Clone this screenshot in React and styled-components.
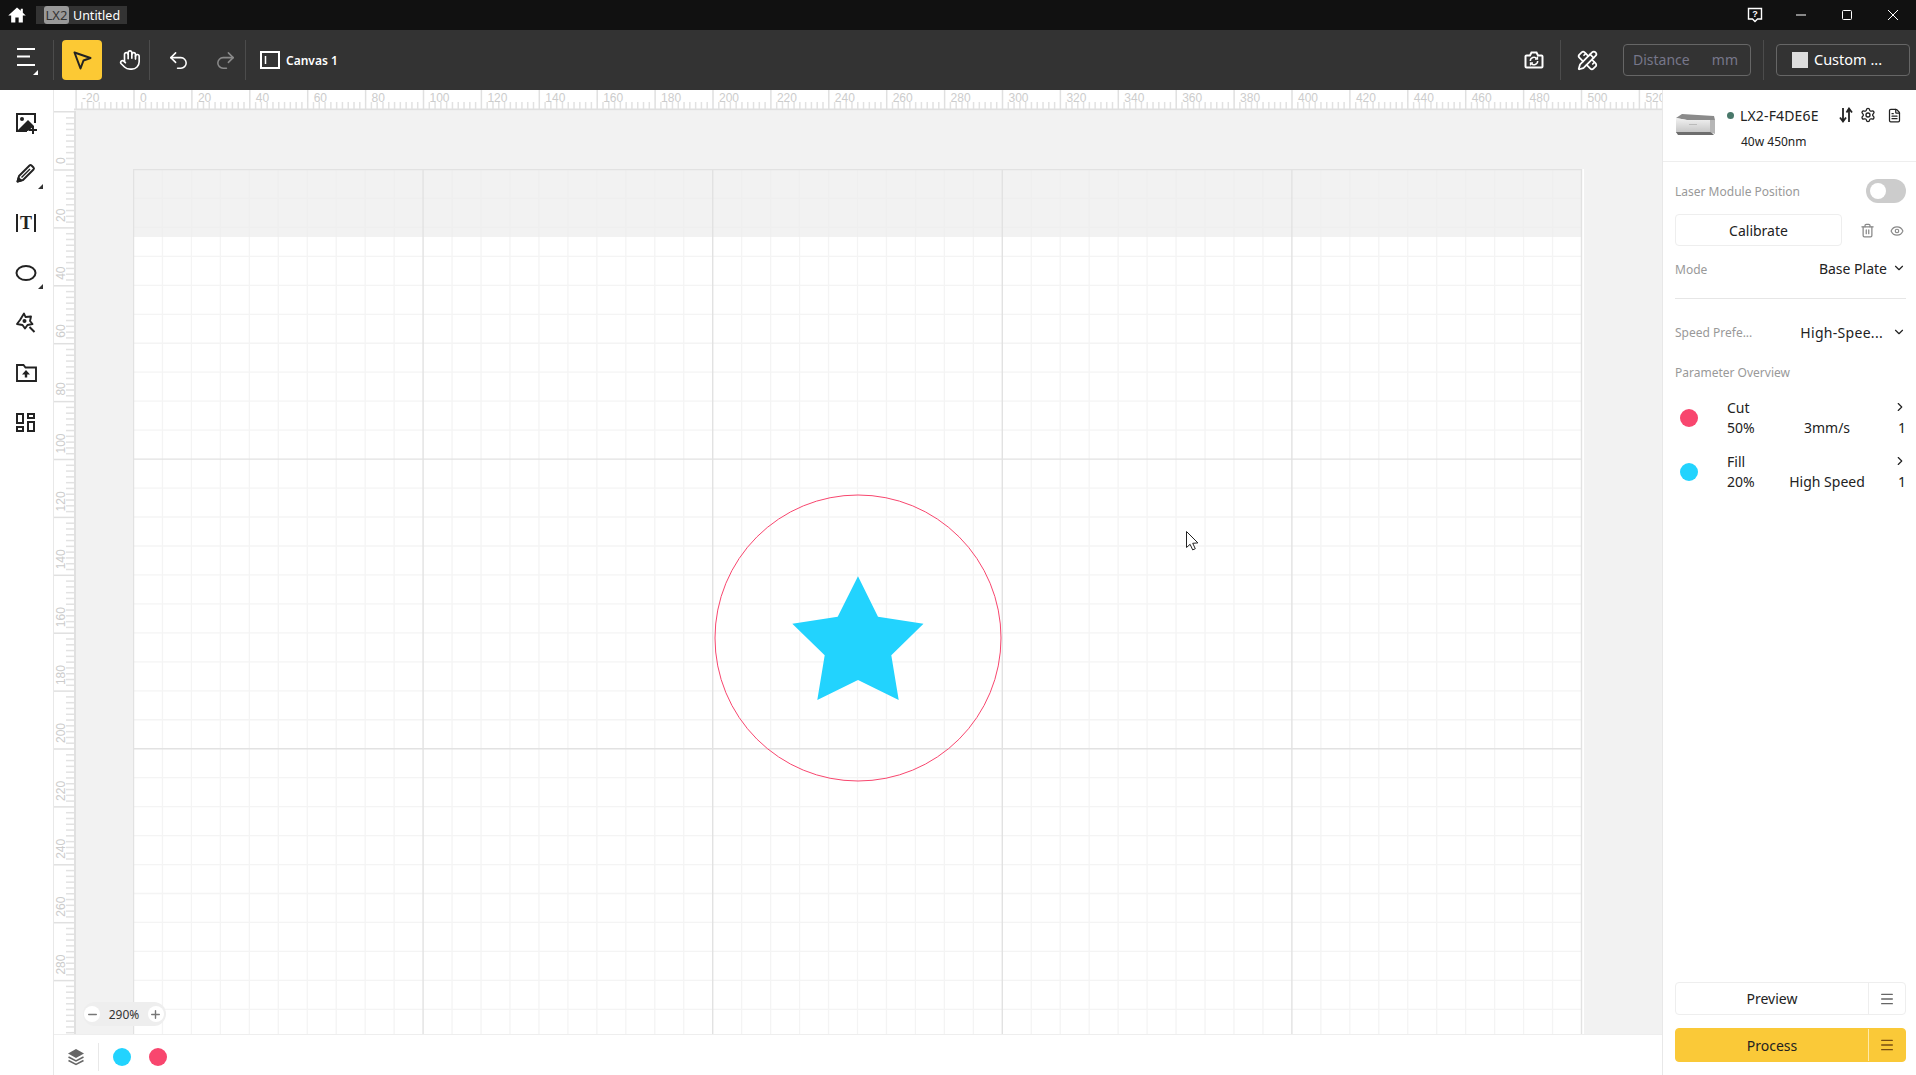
import React from "react";
import styled, { createGlobalStyle } from "styled-components";
import { ChevronDown, ChevronRight, Eye, FileText, Hand, Menu, Minus, PencilRuler, Plus, Redo2, Settings, Trash2, Undo2 } from "lucide-react";

const GlobalStyle = createGlobalStyle`
  html, body { margin: 0; padding: 0; background: #fff; }
  * { box-sizing: border-box; }
  body { font-family: "Noto Sans", "Open Sans", sans-serif; color: #222; }
`;

const Page = styled.div`
  width: 1916px;
  height: 1075px;
  display: flex;
  flex-direction: column;
  overflow: hidden;
`;

const TitleBar = styled.div`
  height: 30px;
  background: #111;
  display: flex;
  align-items: center;
  padding-left: 7px;
  color: #fff;
`;

const DocTab = styled.div`
  margin-left: 9px;
  width: 91px;
  height: 18px;
  background: #333;
  display: flex;
  align-items: center;
  padding-left: 8px;
  gap: 4px;
  font-size: 12.5px;
`;

const Badge = styled.span`
  width: 25px;
  height: 18px;
  background: #999;
  color: #333;
  border-radius: 3px;
  text-align: center;
  line-height: 18px;
  font-size: 13px;
`;

const WindowControls = styled.div`
  margin-left: auto;
  display: flex;
  align-items: center;
`;

const WindowButton = styled.div`
  width: 46px;
  height: 30px;
  display: flex;
  align-items: center;
  justify-content: center;
`;

const Toolbar = styled.div`
  height: 60px;
  background: #333;
  display: flex;
  align-items: center;
  color: #fff;
`;

const ToolDivider = styled.div`
  width: 1px;
  height: 40px;
  background: #4c4c4c;
  margin: ${(p) => p.$margin || "0"};
`;

const ToolButton = styled.div`
  width: ${(p) => p.$width || 40}px;
  height: 40px;
  display: flex;
  align-items: center;
  justify-content: center;
  border-radius: 4px;
  background: ${(p) => (p.$active ? "#fcc934" : "transparent")};
  color: ${(p) => (p.$dim ? "#8a8a8a" : "#fff")};
  margin: ${(p) => p.$margin || "0"};
`;

const MenuGlyph = styled.svg`
  margin-left: 2px;
`;

const CanvasLabel = styled.div`
  display: flex;
  align-items: center;
  gap: 6px;
  margin-left: 14px;
  font-size: 12px;
  font-weight: 600;
`;

const ToolSpacer = styled.div`
  flex: 1;
`;

const DistanceBox = styled.div`
  width: 128px;
  height: 32px;
  margin-left: 16px;
  border: 1px solid #666;
  border-radius: 4px;
  display: flex;
  align-items: center;
  justify-content: space-between;
  padding: 0 12px 2px 9px;
  font-size: 14px;
  color: #77778a;
`;

const CustomBox = styled.div`
  width: 134px;
  height: 32px;
  border: 1px solid #666;
  border-radius: 4px;
  display: flex;
  align-items: center;
  gap: 6px;
  padding: 0 0 2px 15px;
  font-size: 14.5px;
  margin-right: 6px;
`;

const Swatch = styled.div`
  width: 16px;
  height: 16px;
  margin-top: 2px;
  background: #ddd;
`;

const Main = styled.div`
  flex: 1;
  display: flex;
  min-height: 0;
`;

const Sidebar = styled.div`
  width: 54px;
  border-right: 1px solid #e8e8e8;
  display: flex;
  flex-direction: column;
  padding-top: 8px;
`;

const SideButton = styled.div`
  position: relative;
  width: 52px;
  height: 50px;
  display: flex;
  align-items: center;
  justify-content: center;
  color: #222;
`;

const CornerMark = styled.span`
  position: absolute;
  right: 9px;
  bottom: 9px;
  width: 0;
  height: 0;
  border-style: solid;
  border-width: 0 0 5px 5px;
  border-color: transparent transparent #333 transparent;
`;

const Workspace = styled.div`
  width: 1608px;
  display: flex;
  flex-direction: column;
`;

const RulerSvg = styled.svg`
  display: block;
  flex: none;
  font-family: "Liberation Sans", Arial, sans-serif;
  font-size: 12px;
`;

const CanvasRow = styled.div`
  flex: 1;
  display: flex;
  min-height: 0;
`;

const Canvas = styled.div`
  position: relative;
  flex: 1;
  background: #f2f2f2;
  overflow: hidden;
`;

const Paper = styled.div`
  position: absolute;
  left: 57px;
  top: 58px;
  width: 1451px;
  height: 900px;
  background: #fff;
`;

const PaperDrawing = styled.svg`
  position: absolute;
  left: 0;
  top: 0;
`;

const ZoomPill = styled.div`
  position: absolute;
  left: 7px;
  bottom: 8px;
  width: 83px;
  height: 24px;
  border-radius: 12px;
  background: #eee;
  display: flex;
  align-items: center;
  justify-content: space-between;
  padding: 0 2px 0 1px;
  font-size: 12px;
  color: #333;
`;

const ZoomButton = styled.div`
  width: 16px;
  height: 16px;
  border-radius: 50%;
  background: #fff;
  color: #777;
  display: flex;
  align-items: center;
  justify-content: center;
`;

const BottomBar = styled.div`
  height: 41px;
  border-top: 1px solid #eee;
  display: flex;
  align-items: center;
  padding: 4px 0 0 13px;
`;

const LayerDivider = styled.div`
  width: 1px;
  height: 28px;
  background: #e8e8e8;
  margin: 0 14px 0 13px;
`;

const ColorDot = styled.div`
  width: 18px;
  height: 18px;
  border-radius: 50%;
  background: ${(p) => p.$color};
  margin-right: ${(p) => p.$gap || 0}px;
  flex: none;
`;

const RightPanel = styled.div`
  width: 254px;
  border-left: 1px solid #e8e8e8;
  display: flex;
  flex-direction: column;
`;

const DeviceHeader = styled.div`
  height: 72px;
  border-bottom: 1px solid #eee;
  display: flex;
  padding: 22px 0 0 12px;
`;

const DeviceInfo = styled.div`
  margin: -8px 0 0 10px;
  flex: 1;
`;

const DeviceRow = styled.div`
  display: flex;
  align-items: center;
  height: 22px;
  font-size: 14px;
  letter-spacing: 0.15px;
`;

const StatusDot = styled.span`
  width: 7px;
  height: 7px;
  border-radius: 50%;
  background: #49786a;
  margin: 0 6px 0 1px;
`;

const DeviceIcons = styled.div`
  margin-left: 20px;
  display: flex;
  align-items: center;
  gap: 7px;
  & > svg:last-child {
    margin-left: 4px;
  }
`;

const DeviceSub = styled.div`
  font-size: 12px;
  margin: 7px 0 0 15px;
`;

const Controls = styled.div`
  flex: 1;
  display: flex;
  flex-direction: column;
  padding: 17px 10px 13px 12px;
`;

const SettingRow = styled.div`
  display: flex;
  align-items: center;
  justify-content: space-between;
  height: ${(p) => p.$height || 24}px;
  margin-top: ${(p) => p.$top || 0}px;
  margin-bottom: ${(p) => p.$bottom || 0}px;
`;

const MutedLabel = styled.div`
  font-size: 12px;
  color: #999;
`;

const Toggle = styled.div`
  position: relative;
  width: 40px;
  height: 24px;
  border-radius: 12px;
  background: #ccc;
  &::after {
    content: "";
    position: absolute;
    left: 4px;
    top: 4px;
    width: 16px;
    height: 16px;
    border-radius: 50%;
    background: #fff;
  }
`;

const OutlineButton = styled.div`
  width: 167px;
  height: 32px;
  border: 1px solid #eee;
  border-radius: 4px;
  display: flex;
  align-items: center;
  justify-content: center;
  font-size: 14px;
`;

const GrayIcons = styled.div`
  display: flex;
  align-items: center;
  gap: 15px;
  color: #888;
  margin: 1px 2px 0 0;
`;

const SelectValue = styled.div`
  display: flex;
  align-items: center;
  gap: ${(p) => p.$gap || 5}px;
  font-size: 14px;
  letter-spacing: ${(p) => p.$spacing || 0}px;
  padding-bottom: ${(p) => p.$lift || 0}px;
`;

const PanelDivider = styled.div`
  height: 1px;
  background: #e6e6e6;
  margin-top: 17px;
`;

const ParamRow = styled.div`
  display: flex;
  align-items: center;
  height: 54px;
  padding-left: 5px;
  font-size: 14px;
`;

const ParamText = styled.div`
  margin-left: 29px;
  flex: 1;
`;

const ParamLine = styled.div`
  display: grid;
  grid-template-columns: 40px 120px 1fr;
  align-items: center;
  height: 20px;
  line-height: 20px;
`;

const ParamName = styled.div`
  display: flex;
  align-items: center;
  justify-content: space-between;
  height: 20px;
  padding-bottom: 2px;
  margin-right: -1px;
`;

const Centered = styled.span`
  text-align: center;
`;

const RightAligned = styled.span`
  text-align: right;
`;

const Footer = styled.div`
  margin-top: auto;
  display: flex;
  flex-direction: column;
  gap: 13px;
`;

const SplitButton = styled.div`
  height: ${(p) => (p.$primary ? 34 : 33)}px;
  border: 1px solid ${(p) => (p.$primary ? "#fac938" : "#eee")};
  background: ${(p) => (p.$primary ? "#fac938" : "#fff")};
  border-radius: 4px;
  display: flex;
  font-size: 14px;
`;

const SplitMain = styled.div`
  flex: 1;
  display: flex;
  align-items: center;
  justify-content: center;
`;

const SplitMenu = styled.div`
  width: 37px;
  display: flex;
  align-items: center;
  justify-content: center;
  border-left: 1px solid ${(p) => (p.$primary ? "#ffeaa8" : "#eee")};
  color: ${(p) => (p.$primary ? "#7a4e10" : "#666")};
`;

const UNIT = 5.79;
const range = (from, to) => Array.from({ length: to - from + 1 }, (_, i) => from + i);

function HorizontalRuler() {
  const origin = 80; // 0 mark, from the ruler's left edge
  return (
    <RulerSvg width="1608" height="21">
      <rect x="20" y="18.5" width="1588" height="2" fill="#e0e0e0" />
      {range(-10, 265).map((i) =>
        i % 10 === 0 ? null : (
          <rect key={i} x={origin + i * UNIT - 0.75} y="12" width="1.5" height="7" fill="#e2e2e2" />
        )
      )}
      {range(-1, 26).map((i) => (
        <g key={i}>
          <rect x={origin + i * UNIT * 10 - 0.75} y="0" width="1.5" height="20" fill="#e0e0e0" />
          <text x={origin + i * UNIT * 10 + 6} y="12" fill="#ccc">{i * 20}</text>
        </g>
      ))}
    </RulerSvg>
  );
}

function VerticalRuler() {
  const origin = 59;
  return (
    <RulerSvg width="22" height="923">
      <rect x="20" y="0" width="2" height="923" fill="#e0e0e0" />
      <rect x="0" y="0" width="22" height="1.5" fill="#e0e0e0" />
      {range(-10, 150).map((i) =>
        i % 10 === 0 ? null : (
          <rect key={i} x="12" y={origin + i * UNIT - 0.75} width="8" height="1.5" fill="#e2e2e2" />
        )
      )}
      {range(0, 14).map((i) => {
        const y = origin + i * UNIT * 10;
        return (
          <g key={i}>
            <rect x="0" y={y - 0.75} width="20" height="1.5" fill="#e0e0e0" />
            <text x="11" y={y - 6} fill="#ccc" transform={`rotate(-90 11 ${y - 6})`}>{i * 20}</text>
          </g>
        );
      })}
      <rect x="0" y={origin + 868.5} width="20" height="1.5" fill="#e0e0e0" />
    </RulerSvg>
  );
}

function PaperArt() {
  const STEP = 28.96;
  const BAND = 68;
  const cols = range(0, 50);
  const rows = range(0, 31);
  const minorCols = cols.filter((i) => i % 10 !== 0);
  const minorRows = rows.filter((i) => i % 10 !== 0);
  const majorCols = cols.filter((i) => i % 10 === 0);
  const majorRows = rows.filter((i) => i % 10 === 0);
  return (
    <PaperDrawing width="1451" height="900">
      {minorCols.map((i) => (
        <line key={i} x1={i * STEP + 0.5} y1="0" x2={i * STEP + 0.5} y2="900" stroke="#f4f4f4" strokeWidth="1.3" />
      ))}
      {minorRows.map((i) => (
        <line key={i} x1="0" y1={i * STEP + 0.5} x2="1449" y2={i * STEP + 0.5} stroke="#f4f4f4" strokeWidth="1.3" />
      ))}
      <rect x="0" y="0" width="1449" height={BAND} fill="#f2f2f2" />
      {minorCols.map((i) => (
        <line key={i} x1={i * STEP + 0.5} y1="0" x2={i * STEP + 0.5} y2={BAND} stroke="#efefef" strokeWidth="1.3" />
      ))}
      {minorRows.slice(0, 2).map((i) => (
        <line key={i} x1="0" y1={i * STEP + 0.5} x2="1449" y2={i * STEP + 0.5} stroke="#efefef" strokeWidth="1.3" />
      ))}
      {majorCols.map((i) => (
        <line key={i} x1={i * STEP + 0.5} y1="0" x2={i * STEP + 0.5} y2="900" stroke="#e2e2e2" strokeWidth="1.4" />
      ))}
      {majorRows.map((i) => (
        <line key={i} x1="0" y1={i * STEP + 0.5} x2="1449" y2={i * STEP + 0.5} stroke="#e2e2e2" strokeWidth="1.4" />
      ))}
      <circle cx="725" cy="469" r="143" fill="none" stroke="#f8466e" strokeWidth="1" />
      <polygon
        points="725,407.3 745,447.7 790.5,454.7 758.3,486.3 765.7,531 725,511 684.3,531 691.7,486.3 659.3,454.7 704.7,447.7"
        fill="#22d3fe"
      />
      <path d="M1053.5 362.5v16l3.6-3.2 2.6 5.6 2.6-1.2-2.6-5.4 5.2-.4z" fill="#fff" stroke="#222" strokeWidth="1" />
    </PaperDrawing>
  );
}

function PrinterIcon() {
  return (
    <svg width="41" height="24" viewBox="0 0 41 24">
      <defs>
        <linearGradient id="body" x1="0" y1="0" x2="0" y2="1">
          <stop offset="0" stopColor="#f2f2f2" />
          <stop offset="1" stopColor="#c4c4c4" />
        </linearGradient>
      </defs>
      <polygon points="1,6 7,2 39,4 40,8 12,8" fill="#8b8b8b" />
      <polygon points="1,6 12,8 40,8 40,21 1,21" fill="url(#body)" />
      <polygon points="1,20 36,20 39,23 3,23" fill="#6d6d6d" />
      <polygon points="35,8 40,8 40,22 35,20" fill="#b6b6b6" />
      <rect x="14" y="12" width="8" height="1" fill="#bbb" />
    </svg>
  );
}

const Icon = ({ size = 24, box = 24, children, ...rest }) => (
  <svg width={size} height={size} viewBox={`0 0 ${box} ${box}`} fill="none" stroke="currentColor" strokeWidth="2" {...rest}>
    {children}
  </svg>
);

export default function App() {
  return (
    <Page>
      <GlobalStyle />
      <TitleBar>
        <Icon size={20}>
          <path d="M12 3 1.5 12.5H5V21h5v-6h4v6h5v-8.500h3.500L19 9.300V4.500h-2.500v2.500z" fill="#fff" stroke="none" />
        </Icon>
        <DocTab>
          <Badge>LX2</Badge>
          <span>Untitled</span>
        </DocTab>
        <WindowControls>
          <WindowButton>
            <svg width="16" height="16" viewBox="0 0 16 16">
              <path d="M1.500 1.500h13v10.500h-4l-2.500 2.500-2.500-2.500h-4z" fill="none" stroke="#fff" strokeWidth="1.400" />
              <text x="8" y="10" textAnchor="middle" fontSize="9" fontWeight="700" fill="#fff" fontFamily="Liberation Sans">?</text>
            </svg>
          </WindowButton>
          <WindowButton>
            <svg width="12" height="12"><path d="M1 6h10" stroke="#fff" /></svg>
          </WindowButton>
          <WindowButton>
            <svg width="12" height="12"><rect x="1.500" y="1.500" width="9" height="9" rx="1" fill="none" stroke="#fff" /></svg>
          </WindowButton>
          <WindowButton>
            <svg width="12" height="12"><path d="M1 1l10 10M11 1 1 11" stroke="#fff" /></svg>
          </WindowButton>
        </WindowControls>
      </TitleBar>

      <Toolbar>
        <ToolButton $width={53}>
          <MenuGlyph width="22" height="30" viewBox="0 0 22 30">
            <path d="M0 4h18M0 11.500h13M0 20h18" stroke="#fff" strokeWidth="1.800" />
            <path d="M21 25v5h-5z" fill="#fff" />
          </MenuGlyph>
        </ToolButton>
        <ToolDivider />
        <ToolButton $active $margin="0 8px">
          <svg width="20" height="20" viewBox="0 0 20 20">
            <path d="M2.500 2.500 18.500 8l-7 2.500L8.500 18.500z" fill="none" stroke="#222" strokeWidth="2" strokeLinejoin="round" />
          </svg>
        </ToolButton>
        <ToolButton $width={39}>
          <Hand size={22} strokeWidth={1.8} />
        </ToolButton>
        <ToolDivider $margin="0 9px 0 0" />
        <ToolButton $width={38}>
          <Undo2 size={23} strokeWidth={1.6} />
        </ToolButton>
        <ToolButton $dim $margin="0 1px 0 9px" $width={38}>
          <Redo2 size={23} strokeWidth={1.6} />
        </ToolButton>
        <ToolDivider />
        <CanvasLabel>
          <svg width="20" height="18" viewBox="0 0 20 18">
            <rect x="1" y="1" width="18" height="16" fill="none" stroke="#fff" strokeWidth="2" />
            <path d="M5.500 5v8" stroke="#fff" strokeWidth="1.500" />
          </svg>
          Canvas 1
        </CanvasLabel>
        <ToolSpacer />
        <ToolButton $width={40}>
          <svg width="20" height="20" viewBox="0 0 20 20" fill="none" stroke="#fff">
            <path d="M2.500 5.500h3.500l1.500-3h5l1.500 3h3.500a1 1 0 0 1 1 1v10a1 1 0 0 1-1 1h-15a1 1 0 0 1-1-1v-10a1 1 0 0 1 1-1z" strokeWidth="2" />
            <path d="M6.300 11a3.800 3.800 0 0 1 6.600-2.500M13.700 11a3.800 3.800 0 0 1-6.600 2.500" strokeWidth="1.500" />
            <path d="M13.500 6.500v2.500H11M6.500 15.500V13H9" strokeWidth="1.300" />
          </svg>
        </ToolButton>
        <ToolDivider $margin="0 6px" />
        <ToolButton $width={40}>
          <PencilRuler size={21} strokeWidth={2} />
        </ToolButton>
        <DistanceBox>
          <span>Distance</span>
          <span>mm</span>
        </DistanceBox>
        <ToolDivider $margin="0 12px" />
        <CustomBox>
          <Swatch />
          Custom ...
        </CustomBox>
      </Toolbar>

      <Main>
        <Sidebar>
          <SideButton>
            <svg width="24" height="24" viewBox="0 0 24 24">
              <path d="M21 12V3H3v17h10" fill="none" stroke="#222" strokeWidth="2" />
              <path d="M3 20 14 9l6 6-6 5z" fill="#222" />
              <circle cx="8" cy="8" r="2" fill="#222" />
              <path d="M19 15v8M15 19h8" stroke="#222" strokeWidth="2" />
            </svg>
          </SideButton>
          <SideButton>
            <svg width="22" height="22" viewBox="0 0 22 22" fill="none" stroke="#222" strokeWidth="1.900" strokeLinejoin="round">
              <path d="M2.500 19.500 4 14 14.500 3.500q1-1 2 0l2 2q1 1 0 2L8 18z" />
              <path d="M6.500 15.500 15 7" strokeWidth="1.400" />
              <path d="M2.500 19.500 3.500 16l2.500 2.500z" fill="#222" />
            </svg>
            <CornerMark />
          </SideButton>
          <SideButton>
            <svg width="24" height="24" viewBox="0 0 24 24">
              <path d="M3 3v18M21 3v18" stroke="#222" strokeWidth="2" />
              <text x="12" y="18" textAnchor="middle" fontSize="18" fontWeight="700" fill="#222" fontFamily="Liberation Serif">T</text>
            </svg>
          </SideButton>
          <SideButton>
            <svg width="24" height="24" viewBox="0 0 24 24">
              <ellipse cx="12" cy="12" rx="9.500" ry="7" fill="none" stroke="#222" strokeWidth="2" />
            </svg>
            <CornerMark />
          </SideButton>
          <SideButton>
            <svg width="22" height="22" viewBox="0 0 22 22">
              <path d="M9 1.500 10.500 5 16 4.500 15 9l2.500 3-5 1L10 16.500 7.500 13 2 12l3-4z" fill="none" stroke="#222" strokeWidth="1.900" strokeLinejoin="round" />
              <circle cx="9.500" cy="9" r="2" fill="#222" />
              <path d="m14.500 15 5 5" stroke="#222" strokeWidth="2" />
            </svg>
          </SideButton>
          <SideButton>
            <svg width="22" height="22" viewBox="0 0 22 22">
              <path d="M2 3h6.500l2 2.500H21V19H2z" fill="none" stroke="#222" strokeWidth="1.900" />
              <path d="M11 8 15 12.500H12.200V15.500H9.800V12.500H7z" fill="#222" />
            </svg>
          </SideButton>
          <SideButton>
            <svg width="22" height="22" viewBox="0 0 22 22">
              <g fill="none" stroke="#222" strokeWidth="2">
                <rect x="2" y="2" width="6" height="9" />
                <rect x="13" y="2" width="6" height="4" />
                <rect x="2" y="15" width="6" height="4" />
                <rect x="13" y="10" width="6" height="9" />
              </g>
            </svg>
          </SideButton>
        </Sidebar>

        <Workspace>
          <HorizontalRuler />
          <CanvasRow>
            <VerticalRuler />
            <Canvas>
              <Paper>
                <PaperArt />
              </Paper>
              <ZoomPill>
                <ZoomButton><Minus size={13} strokeWidth={2.6} /></ZoomButton>
                <span>290%</span>
                <ZoomButton><Plus size={13} strokeWidth={2.6} /></ZoomButton>
              </ZoomPill>
            </Canvas>
          </CanvasRow>
          <BottomBar>
            <svg width="18" height="18" viewBox="0 0 18 18">
              <path d="M9 1 17 5.500 9 10 1 5.500z" fill="#666" />
              <path d="M1.500 9 9 13l7.500-4M1.500 12.500 9 16.500l7.500-4" fill="none" stroke="#666" strokeWidth="1.500" />
            </svg>
            <LayerDivider />
            <ColorDot $color="#22d3fe" $gap={18} />
            <ColorDot $color="#f8466e" />
          </BottomBar>
        </Workspace>

        <RightPanel>
          <DeviceHeader>
            <PrinterIcon />
            <DeviceInfo>
              <DeviceRow>
                <StatusDot />
                LX2-F4DE6E
                <DeviceIcons>
                  <svg width="14" height="16" viewBox="0 0 14 16">
                    <path d="M4 1v13M1 10.500 4 14.500l3-4M10 15V2M7.500 5.500 10 1.500l3 4" fill="none" stroke="#222" strokeWidth="1.800" />
                  </svg>
                  <Settings size={16} strokeWidth={2} />
                  <FileText size={15} strokeWidth={2} />
                </DeviceIcons>
              </DeviceRow>
              <DeviceSub>40w 450nm</DeviceSub>
            </DeviceInfo>
          </DeviceHeader>

          <Controls>
            <SettingRow>
              <MutedLabel>Laser Module Position</MutedLabel>
              <Toggle />
            </SettingRow>
            <SettingRow $height={32} $top={11}>
              <OutlineButton>Calibrate</OutlineButton>
              <GrayIcons>
                <Trash2 size={15} />
                <Eye size={14} />
              </GrayIcons>
            </SettingRow>
            <SettingRow $top={11}>
              <MutedLabel>Mode</MutedLabel>
              <SelectValue $lift={2}>Base Plate <ChevronDown size={14} /></SelectValue>
            </SettingRow>
            <PanelDivider />
            <SettingRow $top={21}>
              <MutedLabel>Speed Prefe...</MutedLabel>
              <SelectValue $gap={9} $spacing={0.3}>High-Spee... <ChevronDown size={14} /></SelectValue>
            </SettingRow>
            <SettingRow $height={20} $top={18} $bottom={9}>
              <MutedLabel>Parameter Overview</MutedLabel>
            </SettingRow>
            {[
              { name: "Cut", color: "#f8466e", power: "50%", speed: "3mm/s" },
              { name: "Fill", color: "#22d3fe", power: "20%", speed: "High Speed" },
            ].map((row) => (
              <ParamRow key={row.name}>
                <ColorDot $color={row.color} />
                <ParamText>
                  <ParamName>
                    <span>{row.name}</span>
                    <ChevronRight size={14} />
                  </ParamName>
                  <ParamLine>
                    <span>{row.power}</span>
                    <Centered>{row.speed}</Centered>
                    <RightAligned>1</RightAligned>
                  </ParamLine>
                </ParamText>
              </ParamRow>
            ))}
            <Footer>
              <SplitButton>
                <SplitMain>Preview</SplitMain>
                <SplitMenu><Menu size={16} /></SplitMenu>
              </SplitButton>
              <SplitButton $primary>
                <SplitMain>Process</SplitMain>
                <SplitMenu $primary><Menu size={16} /></SplitMenu>
              </SplitButton>
            </Footer>
          </Controls>
        </RightPanel>
      </Main>
    </Page>
  );
}
